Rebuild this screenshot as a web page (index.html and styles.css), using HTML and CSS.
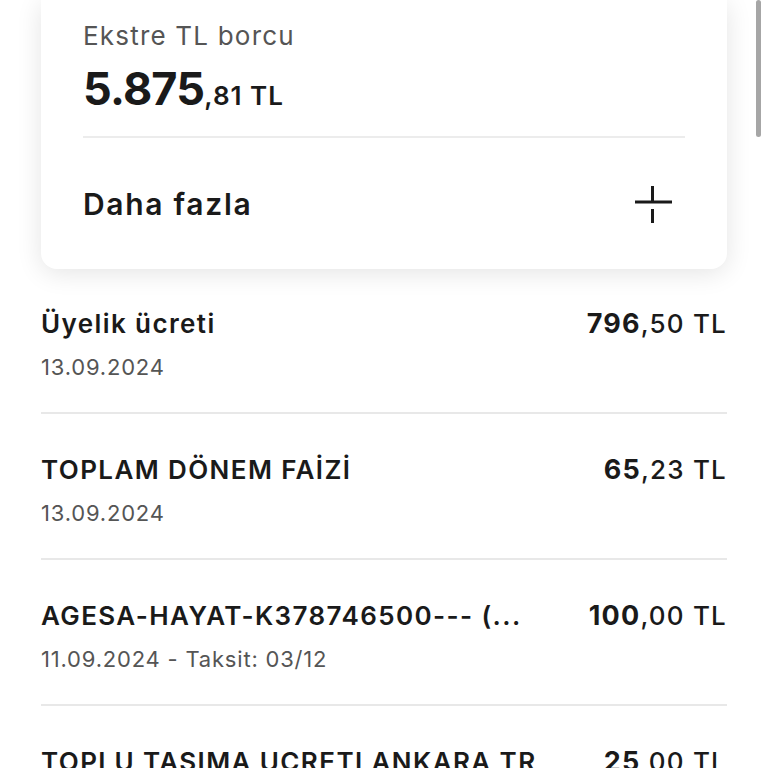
FILE: index.html
```html
<!DOCTYPE html>
<html lang="tr">
<head>
  <meta charset="UTF-8">
  <title>Ekstre</title>
  <link rel="stylesheet" href="styles.css">
</head>
<body>

  <div class="page">
    <!-- Statement summary card -->
    <div class="card">
      <div class="card-label">Ekstre TL borcu</div>
      <div class="card-amount"><span class="big">5.875</span><span class="small">,81 TL</span></div>
      <div class="card-more">
        <span>Daha fazla</span>
        <svg class="plus" width="40" height="40" viewBox="0 0 40 40">
          <path d="M19.5 2 V19 M2 18 H39 M19.5 25 V39" stroke="#1a1a1a" stroke-width="3" fill="none" />
        </svg>
      </div>
    </div>

    <!-- Transactions -->
    <div class="list">
      <div class="row">
        <div class="row-info">
          <div class="row-title">Üyelik ücreti</div>
          <div class="row-date">13.09.2024</div>
        </div>
        <div class="row-amount"><b>796</b>,50 TL</div>
      </div>
      <div class="row">
        <div class="row-info">
          <div class="row-title">TOPLAM DÖNEM FAİZİ</div>
          <div class="row-date">13.09.2024</div>
        </div>
        <div class="row-amount"><b>65</b>,23 TL</div>
      </div>
      <div class="row">
        <div class="row-info">
          <div class="row-title">AGESA-HAYAT-K378746500--- (...</div>
          <div class="row-date">11.09.2024 - Taksit: 03/12</div>
        </div>
        <div class="row-amount"><b>100</b>,00 TL</div>
      </div>
      <div class="row">
        <div class="row-info">
          <div class="row-title">TOPLU TASIMA UCRETI ANKARA TR</div>
          <div class="row-date">10.09.2024</div>
        </div>
        <div class="row-amount"><b>25</b>,00 TL</div>
      </div>
    </div>
  </div>

  <div class="scrollbar"></div>

</body>
</html>
```

FILE: styles.css
```css
body {
  margin: 0;
  background: #fff;
  font-family: Inter, "Noto Sans", sans-serif;
  color: #1a1a1a;
  height: 768px;
  overflow: hidden;
}

.page {
  padding: 0 41px;
}

.card {
  background: #fff;
  border-radius: 0 0 16px 16px;
  box-shadow: 0 4px 26px rgba(0, 0, 0, 0.11);
  padding: 18px 42px 0 42px;
}

.card-label {
  font-size: 26px;
  letter-spacing: 1.2px;
  color: #555;
  line-height: 36px;
}

.card-amount {
  margin-top: 10px;
  line-height: 50px;
  padding-bottom: 12px;
  border-bottom: 2px solid #ececec;
}

.card-amount .big {
  font-size: 45px;
  font-weight: 700;
  letter-spacing: -0.8px;
}

.card-amount .small {
  font-size: 26px;
  font-weight: 600;
  letter-spacing: 1px;
}

.card-more {
  display: flex;
  justify-content: space-between;
  align-items: center;
  height: 131px;
  font-size: 30px;
  font-weight: 600;
  letter-spacing: 1.7px;
}

.plus {
  margin-right: 12px;
}

.list {
  margin-top: 39px;
}

.row {
  display: flex;
  justify-content: space-between;
  height: 104px;
  border-bottom: 2px solid #e8e8e8;
  margin-bottom: 40px;
}

.row-title {
  font-size: 26px;
  font-weight: 600;
  letter-spacing: 1.4px;
  line-height: 32px;
}

.row-date {
  font-size: 22px;
  letter-spacing: 0.8px;
  color: #555;
  margin-top: 12px;
  line-height: 30px;
}

.row-amount {
  font-size: 26px;
  font-weight: 500;
  letter-spacing: 1.2px;
  line-height: 32px;
}

.row-amount b {
  font-weight: 650;
  font-size: 27px;
}

.scrollbar {
  position: absolute;
  top: 0;
  right: 7px;
  width: 5px;
  height: 137px;
  background: #a6a6a6;
  border-radius: 3px;
}
```
